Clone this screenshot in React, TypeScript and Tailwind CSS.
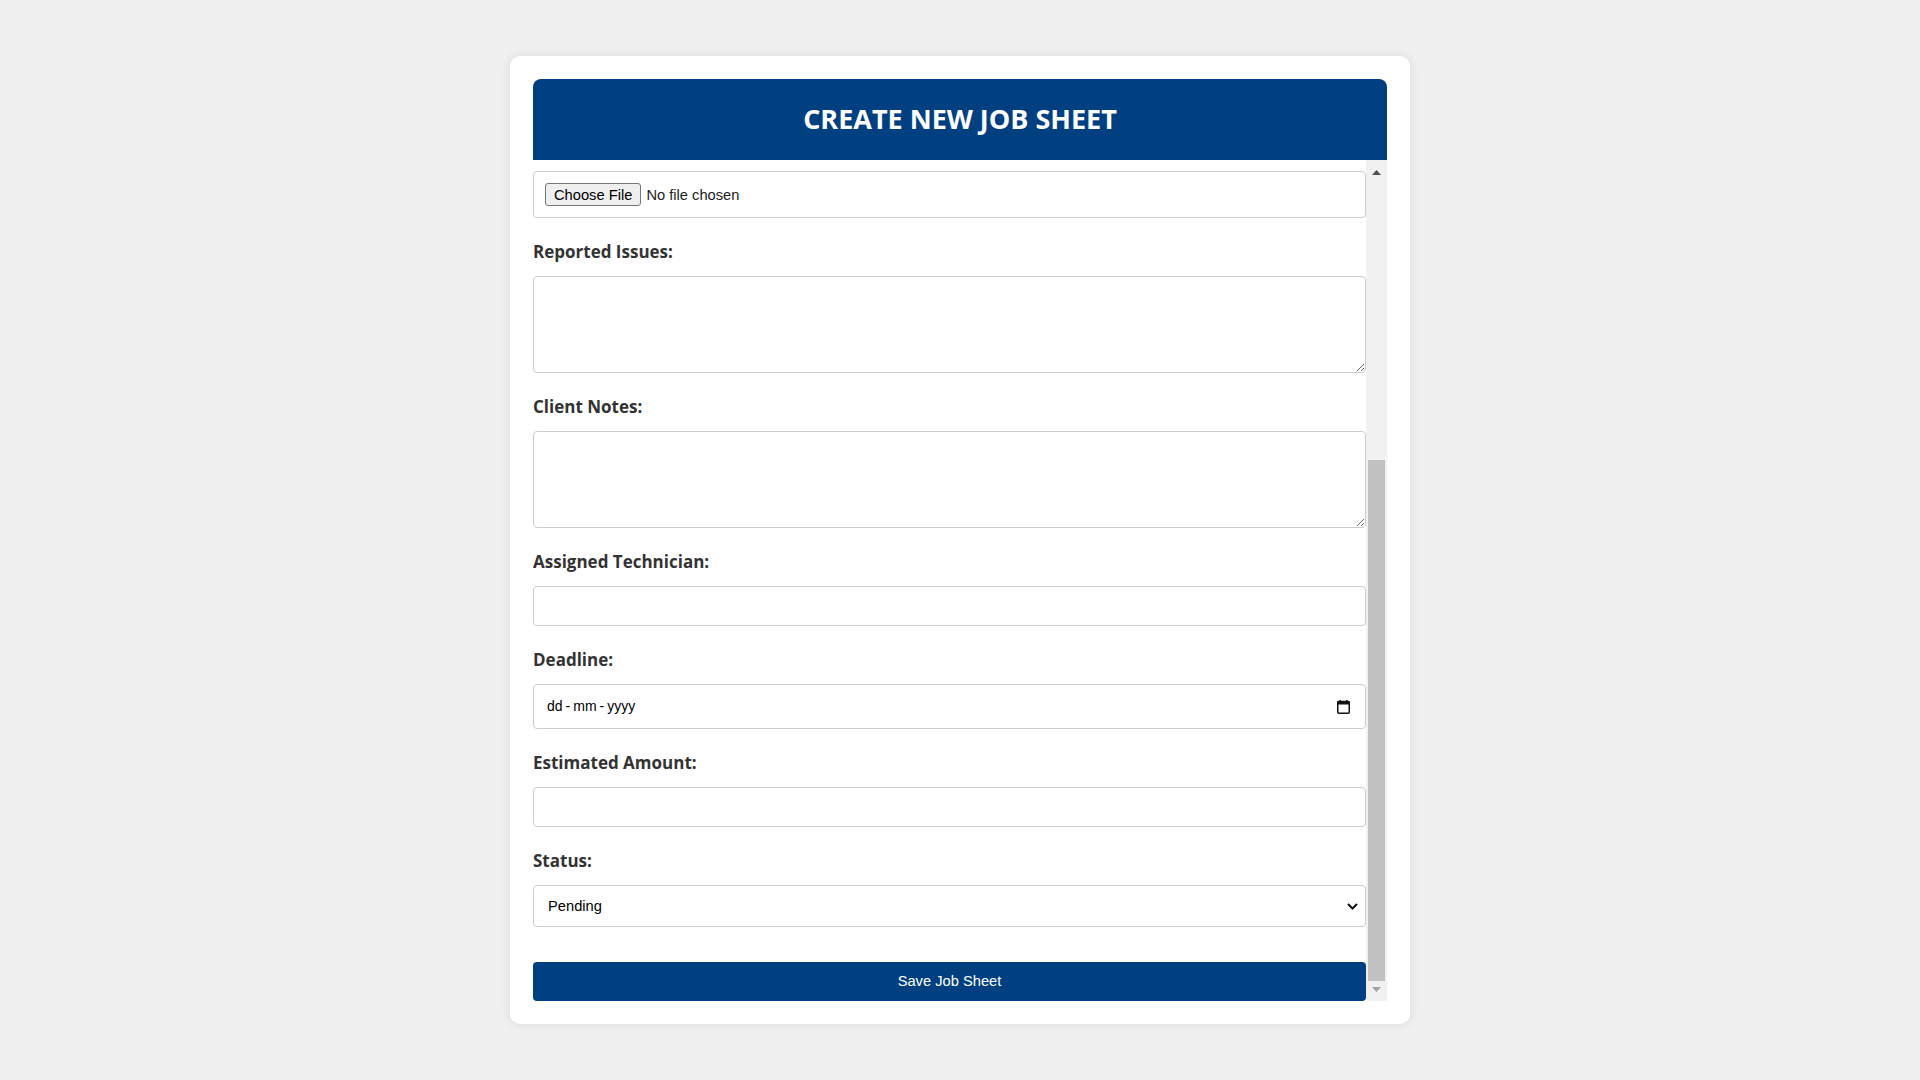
import { useLayoutEffect, useRef, useState } from "react";

const labelCls =
  "block mb-[12px] text-[17px] leading-[24px] font-bold text-[#333] [font-family:'Open_Sans',sans-serif]";
const inputCls =
  "block w-full h-[40px] px-[12px] border border-[#ccc] rounded-[4px] bg-white text-[14.7px] text-black outline-none [font-family:'Liberation_Sans',Arial,sans-serif]";
const areaCls =
  "block w-full h-[97px] px-[12px] py-[10px] border border-[#ccc] rounded-[4px] bg-white text-[14.7px] text-black outline-none [font-family:'Liberation_Sans',Arial,sans-serif]";

const Field = ({ label, children }: { label: string; children: React.ReactNode }) => (
  <div className="mb-[22px]">
    <label className={labelCls}>{label}</label>
    {children}
  </div>
);

const DateBox = () => (
  <div className="flex items-center justify-between h-[45px] pl-[13px] pr-[15px] border border-[#ccc] rounded-[4px] bg-white text-[14px] text-black [font-family:'Liberation_Sans',Arial,sans-serif]">
    <span>
      dd<span className="mx-[3px]">-</span>mm<span className="mx-[3px]">-</span>yyyy
    </span>
    <svg width="13" height="14" viewBox="0 0 13 14">
      <rect x="0.75" y="1.5" width="11.5" height="11.75" fill="none" stroke="#111" strokeWidth="1.5" rx="1" />
      <rect x="0.5" y="1" width="12" height="3.5" fill="#111" />
      <rect x="2.5" y="0" width="1.5" height="2" fill="#111" />
      <rect x="9" y="0" width="1.5" height="2" fill="#111" />
    </svg>
  </div>
);

const App = () => {
  const scrollRef = useRef<HTMLDivElement>(null);
  const trackRef = useRef<HTMLDivElement>(null);
  const [thumb, setThumb] = useState({ top: 0, height: 0 });

  // scroll form to the bottom and size the scrollbar thumb from it
  useLayoutEffect(() => {
    const el = scrollRef.current;
    const track = trackRef.current;
    if (!el || !track) return;
    el.scrollTop = el.scrollHeight;
    const update = () => {
      const th = track.clientHeight;
      const h = (th * el.clientHeight) / el.scrollHeight;
      const max = el.scrollHeight - el.clientHeight;
      const top = max > 0 ? ((th - h) * el.scrollTop) / max : 0;
      setThumb({ top, height: h });
    };
    update();
    el.addEventListener("scroll", update);
    return () => el.removeEventListener("scroll", update);
  }, []);

  return (
    <div className="min-h-screen bg-[#f0f0f0] pt-[56px] pb-[56px]">
      <div className="w-[900px] mx-auto bg-white rounded-[10px] p-[23px] shadow-[0_0_10px_rgba(0,0,0,0.1)]">
        <div className="h-[81px] flex items-center justify-center bg-[#004080] rounded-t-[8px]">
          <h1 className="text-white text-[27px] font-bold [font-family:'Open_Sans',sans-serif]">
            CREATE NEW JOB SHEET
          </h1>
        </div>

        <div className="flex h-[841px]">
          <div
            ref={scrollRef}
            className="flex-1 overflow-y-auto [scrollbar-width:none] [&::-webkit-scrollbar]:hidden"
          >
            <form className="pt-[30px]" onSubmit={(e) => e.preventDefault()}>
              <Field label="Client Name:">
                <input type="text" className={inputCls} />
              </Field>
              <Field label="Contact Info (Phone 10nos/Email):">
                <input type="text" className={inputCls} />
              </Field>
              <Field label="Received Date:">
                <DateBox />
              </Field>
              <Field label="Inventory Received:">
                <input type="text" className={inputCls} />
              </Field>
              <Field label="Upload Inventory Image/Document/Video:">
                <input
                  type="file"
                  className="block w-full h-[47px] px-[11px] py-[11px] border border-[#ccc] rounded-[4px] bg-white text-[14.7px] text-[#222] [font-family:'Liberation_Sans',Arial,sans-serif] file:h-[23px] file:px-[8px] file:mr-[5px] file:bg-[#efefef] file:border file:border-solid file:border-[#767676] file:rounded-[3px] file:text-black file:text-[14.7px] file:[font-family:'Liberation_Sans',Arial,sans-serif]"
                />
              </Field>
              <Field label="Reported Issues:">
                <textarea className={areaCls} />
              </Field>
              <Field label="Client Notes:">
                <textarea className={areaCls} />
              </Field>
              <Field label="Assigned Technician:">
                <input type="text" className={inputCls} />
              </Field>
              <Field label="Deadline:">
                <DateBox />
              </Field>
              <Field label="Estimated Amount:">
                <input type="text" className={inputCls} />
              </Field>
              <Field label="Status:">
                <div className="relative">
                  <select className={inputCls + " h-[42px] pl-[14px] appearance-none"} defaultValue="Pending">
                    <option>Pending</option>
                    <option>In Progress</option>
                    <option>Completed</option>
                  </select>
                  <svg
                    className="absolute right-[8px] top-[18px] pointer-events-none"
                    width="11"
                    height="7"
                    viewBox="0 0 11 7"
                  >
                    <path d="M1 1l4.5 4.5L10 1" fill="none" stroke="#111" strokeWidth="2" />
                  </svg>
                </div>
              </Field>
              <button
                type="submit"
                className="block w-full h-[39px] mt-[35px] bg-[#004080] text-white rounded-[4px] text-[14.7px] [font-family:'Liberation_Sans',Arial,sans-serif]"
              >
                Save Job Sheet
              </button>
            </form>
          </div>

          {/* scrollbar */}
          <div className="w-[21px] flex flex-col bg-[#f1f1f1]">
            <div className="h-[20px] flex justify-center pt-[10px]">
              <svg width="9" height="5" viewBox="0 0 9 5">
                <path d="M4.5 0L9 5H0z" fill="#505050" />
              </svg>
            </div>
            <div ref={trackRef} className="flex-1 relative">
              <div
                className="absolute left-[2px] right-[2px] bg-[#c1c1c1]"
                style={{ top: thumb.top, height: thumb.height }}
              />
            </div>
            <div className="h-[20px] flex justify-center pt-[6px]">
              <svg width="9" height="5" viewBox="0 0 9 5">
                <path d="M0 0H9L4.5 5z" fill="#a3a3a3" />
              </svg>
            </div>
          </div>
        </div>
      </div>
    </div>
  );
};

export default App;
